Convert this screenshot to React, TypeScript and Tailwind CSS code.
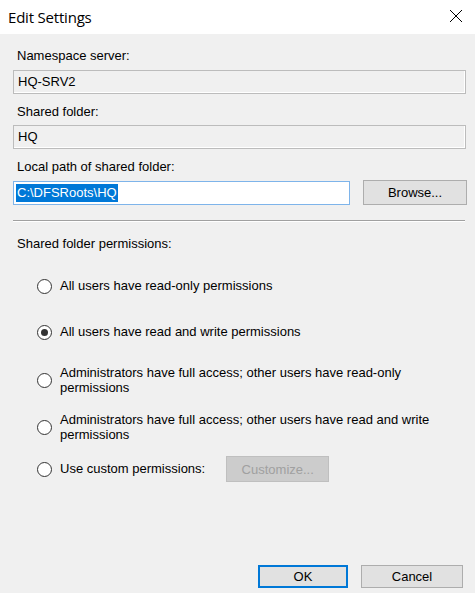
const font = "font-['Liberation_Sans',Arial,sans-serif]";

const Radio = ({ checked }: { checked?: boolean }) => (
  <div className="w-[15px] h-[15px] shrink-0 rounded-full border border-[#333333] bg-white flex items-center justify-center">
    {checked && <div className="w-[7px] h-[7px] rounded-full bg-[#333333]" />}
  </div>
);

const Option = ({ label, checked, two }: { label: React.ReactNode; checked?: boolean; two?: boolean }) => (
  <div className="flex items-center">
    <div className="w-[23px] flex justify-start">
      <Radio checked={checked} />
    </div>
    <div className={two ? "leading-[15px]" : "leading-[16px]"}>{label}</div>
  </div>
);

export default function App() {
  return (
    <div className={`w-[475px] h-[593px] bg-[#f0f0f0] flex flex-col text-[13px] text-black ${font}`}>
      <div className="h-[34px] bg-white flex items-center justify-between pl-[8px] pr-[12px] shrink-0">
        <span className="font-['Open_Sans',sans-serif] text-[15px] tracking-[-0.2px]">Edit Settings</span>
        <svg width="14" height="14" viewBox="0 0 14 14" className="mt-[-2px]">
          <path d="M1 1L13 13M13 1L1 13" stroke="#000" strokeWidth="1" />
        </svg>
      </div>

      <div className="flex flex-col pl-[13px] pr-[8px] pt-[14px] flex-1">
        <div className="pl-[4px] leading-[16px]">Namespace server:</div>
        <div className="mt-[6px] mr-[1px] h-[24px] border border-[#bcbcbc] shadow-[inset_-1px_-1px_0_#ffffff] bg-[#f0f0f0] flex items-center pl-[4px]">HQ-SRV2</div>

        <div className="mt-[10px] pl-[4px] leading-[16px]">Shared folder:</div>
        <div className="mt-[5px] mr-[1px] h-[24px] border border-[#bcbcbc] shadow-[inset_-1px_-1px_0_#ffffff] bg-[#f0f0f0] flex items-center pl-[4px]">HQ</div>

        <div className="mt-[10px] pl-[4px] leading-[16px]">Local path of shared folder:</div>
        <div className="mt-[5px] flex items-center">
          <div className="w-[337px] h-[24px] border border-[#7eb4ea] bg-white flex items-center pl-[2px]">
            <span className="bg-[#0078d7] text-white leading-[18px] px-[1px]">C:\DFSRoots\HQ</span>
          </div>
          <button className="ml-[13px] w-[104px] h-[25px] border border-[#adadad] bg-[#e1e1e1] leading-none">Browse...</button>
        </div>

        <div className="mt-[15px] mr-[2px] h-[2px] border-t border-[#a0a0a0] border-b border-b-white" />

        <div className="mt-[14px] pl-[4px] leading-[16px]">Shared folder permissions:</div>

        <div className="flex flex-col pl-[24px]">
          <div className="mt-[26px]">
            <Option label="All users have read-only permissions" />
          </div>
          <div className="mt-[30px]">
            <Option checked label="All users have read and write permissions" />
          </div>
          <div className="mt-[25px]">
            <Option two label={<>Administrators have full access; other users have read-only<br />permissions</>} />
          </div>
          <div className="mt-[17px]">
            <Option two label={<>Administrators have full access; other users have read and write<br />permissions</>} />
          </div>
          <div className="mt-[14px] flex items-center">
            <Option label="Use custom permissions:" />
            <button className="ml-[21px] w-[103px] h-[26px] border border-[#bfbfbf] bg-[#cccccc] text-[#a0a0a0] leading-none">Customize...</button>
          </div>
        </div>

        <div className="mt-auto mb-[5px] flex justify-end gap-[13px] pr-[4px]">
          <button className="w-[90px] h-[23px] border-2 border-[#0078d7] bg-[#e1e1e1] leading-none">OK</button>
          <button className="w-[102px] h-[23px] border border-[#adadad] bg-[#e1e1e1] leading-none">Cancel</button>
        </div>
      </div>
    </div>
  );
}
